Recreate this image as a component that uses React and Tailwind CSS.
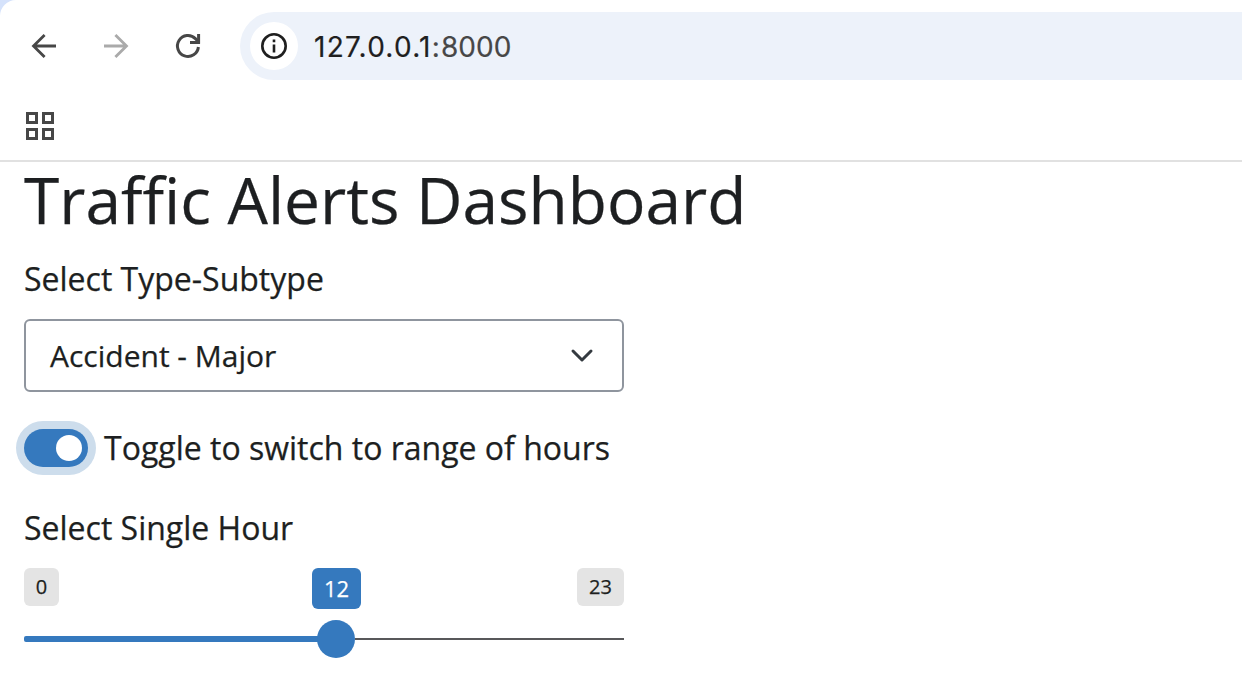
export default function App() {
  return (
    <div className="h-[676px] w-[1242px] overflow-hidden bg-[#d5e2fb] font-['Open_Sans',sans-serif] text-[#1d1f21]">
      <header className="h-[162px] rounded-tl-[16px] border-b-2 border-[#e1e1e1] bg-white pt-3">
        <nav className="flex h-[68px] items-center">
          <div className="flex w-60 items-center gap-10 pl-7">
            <button aria-label="Back">
              <svg className="block" width="32" height="32" viewBox="0 0 32 32" fill="none" stroke="#474747" strokeWidth="2.8"><path d="M28 16H6M16.600 4.900L5.500 16l11.100 11.100" /></svg>
            </button>
            <button aria-label="Forward">
              <svg className="block" width="32" height="32" viewBox="0 0 32 32" fill="none" stroke="#aaaaaa" strokeWidth="2.8"><path d="M4 16h22M15.400 4.900L26.500 16 15.400 27.100" /></svg>
            </button>
            <button aria-label="Reload">
              <svg className="block" width="32" height="32" viewBox="0 0 32 32" fill="none" stroke="#474747" strokeWidth="3"><path d="M26.400 17A10.500 10.500 0 1 1 23.400 8.600L26 11.200" /><path d="M26.600 4v9.700M28 12.500H18" /></svg>
            </button>
          </div>
          <div className="flex h-[68px] flex-1 items-center rounded-l-full bg-[#edf2fa] pl-2.5">
            <div className="flex size-12 items-center justify-center rounded-full bg-white">
              <svg width="28" height="28" viewBox="0 0 28 28" fill="none" stroke="#1f1f1f" strokeWidth="2.6"><circle cx="14" cy="14" r="11.700" /><path d="M14 12.500V20.500M14 7.500v2.700" /></svg>
            </div>
            <div className="ml-4 pt-px font-[Inter,sans-serif] text-[28px] tracking-[1.25px] text-[#1f1f1f] [-webkit-text-stroke:0.2px]">127.0.0.1<span className="text-[#474747]">:<span className="tracking-[0px]">8000</span></span></div>
          </div>
        </nav>
        <div className="flex h-20 items-center pt-3 pl-6">
          <svg width="32" height="32" viewBox="0 0 32 32" fill="none" stroke="#474747" strokeWidth="3"><path d="M3.500 3.500h9v9h-9zM19.500 3.500h9v9h-9zM3.500 19.500h9v9h-9zM19.500 19.500h9v9h-9z" /></svg>
        </div>
      </header>
      <main className="h-[514px] bg-white pl-6 [-webkit-text-stroke:0.25px]">
        <h1 className="h-[76px] text-[64px] leading-[76px] whitespace-nowrap">Traffic Alerts Dashboard</h1>
        <div className="mt-[17px] h-12 text-[32px] leading-[48px]">Select Type-Subtype</div>
        <div className="mt-4 flex h-[73px] w-[600px] items-center justify-between rounded-md border-2 border-[#8f959e] pr-7 pl-6 text-[30px]">
          <span>Accident - Major</span>
          <svg width="24" height="24" viewBox="0 0 24 24" fill="none" stroke="#343a40" strokeWidth="3" strokeLinecap="round" strokeLinejoin="round"><path d="M3 7l9 9 9-9" /></svg>
        </div>
        <div className="mt-8 flex h-12 items-center gap-4 text-[32px]">
          <div className="flex h-[38px] w-16 items-center justify-end rounded-full bg-[#3579be] pr-1.5 ring-8 ring-[#cdddec]"><span className="size-[26px] rounded-full bg-white" /></div>
          <span>Toggle to switch to range of hours</span>
        </div>
        <div className="mt-8 h-12 text-[32px] leading-[48px]">Select Single Hour</div>
        <div className="mt-4 w-[600px]">
          <div className="grid h-[52px] grid-cols-[288px_49px_1fr] items-start">
            <span className="flex h-[38px] w-[35px] items-center justify-center rounded-md bg-[#e4e4e4] text-xl">0</span>
            <span className="flex h-[41px] items-center justify-center rounded-md bg-[#3579be] text-[22px] text-white">12</span>
            <span className="flex h-[38px] w-[47px] items-center justify-center justify-self-end rounded-md bg-[#e4e4e4] text-xl">23</span>
          </div>
          <div className="flex h-[38px] items-center">
            <div className="-mr-1 h-1.5 w-[297px] rounded-l-[2px] bg-[#3579be]" />
            <div className="size-[38px] rounded-full bg-[#3579be]" />
            <div className="h-0.5 flex-1 bg-[#58585a]" />
          </div>
        </div>
      </main>
    </div>
  )
}
